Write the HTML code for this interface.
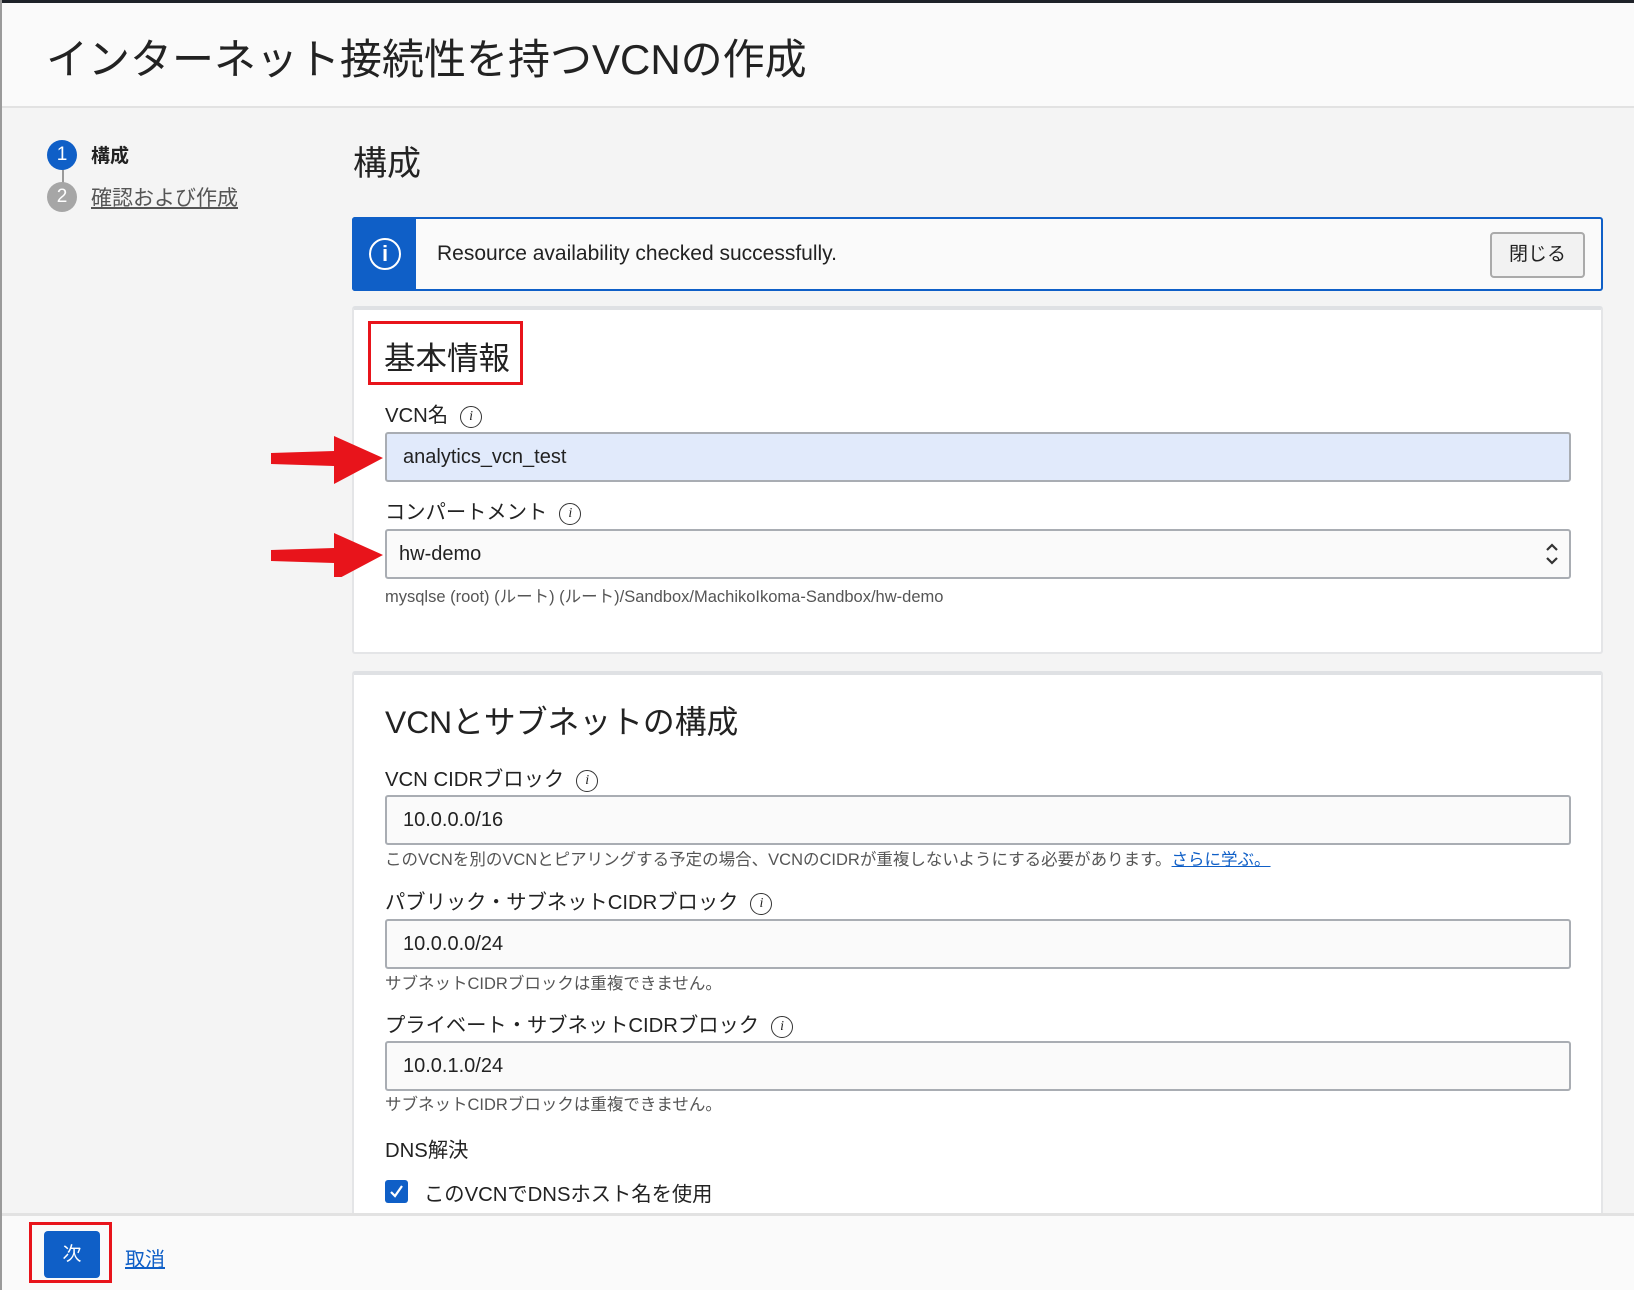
<!DOCTYPE html>
<html><head><meta charset="utf-8"><style>
*{box-sizing:border-box;margin:0;padding:0}
body{width:1634px;height:1290px;overflow:hidden;background:#f4f4f4;font-family:"Liberation Sans","Noto Sans CJK JP",sans-serif;color:#222;position:relative}
.abs{position:absolute}
.top{left:0;top:0;width:1634px;height:3px;background:#1e2228}
.lb{left:0;top:0;width:2px;height:1290px;background:#9a9a9a}
.hdr{left:2px;top:3px;width:1632px;height:105px;background:#fafafa;border-bottom:2px solid #e2e2e2}
.title{left:46px;top:26px;font-size:42px;color:#222;white-space:nowrap}
.circ{width:30px;height:30px;border-radius:50%;color:#fff;font-size:19px;text-align:center;line-height:30px}
.panel{background:#fff;border:2px solid #e4e5e7;border-top:4px solid #dfe1e4;border-radius:3px}
.lbl{font-size:20.3px;color:#222;white-space:nowrap}
.inp{left:385px;width:1186px;height:50px;border:2px solid #a9adb3;border-radius:3px;background:#fafafa;font-size:20px;padding-left:16px;line-height:46px}
.help{font-size:16.5px;color:#555;white-space:nowrap}
.ii{display:inline-block;width:22px;height:22px;border:1.5px solid #333;border-radius:50%;font-size:14px;font-style:italic;font-family:"Liberation Serif",serif;text-align:center;line-height:19px;vertical-align:middle;margin-left:12px}
</style></head><body>
<div class="abs top"></div>
<div class="abs hdr"></div>
<div class="abs lb"></div>
<div class="abs title">インターネット接続性を持つVCNの作成</div>

<div class="abs" style="left:62px;top:160px;width:2px;height:36px;background:#999"></div>
<div class="abs circ" style="left:47px;top:140px;background:#0f5fc7">1</div>
<div class="abs" style="left:91px;top:141px;font-size:19px;font-weight:bold">構成</div>
<div class="abs circ" style="left:47px;top:182px;background:#a6a6a6">2</div>
<div class="abs" style="left:91px;top:182px;font-size:21px;color:#555;text-decoration:underline">確認および作成</div>

<div class="abs" style="left:353px;top:136px;font-size:34px">構成</div>

<div class="abs" style="left:352px;top:217px;width:1251px;height:74px;border:2px solid #0f5fc7;border-radius:3px;background:#fafafa"></div>
<div class="abs" style="left:352px;top:217px;width:64px;height:74px;background:#0f5fc7;border-radius:3px 0 0 3px"></div>
<div class="abs" style="left:369px;top:238px;width:32px;height:32px;border:2.5px solid #fff;border-radius:50%;color:#fff;text-align:center;font-size:22px;line-height:27px;font-weight:bold">i</div>
<div class="abs" style="left:437px;top:242px;font-size:21px">Resource availability checked successfully.</div>
<div class="abs" style="left:1490px;top:232px;width:95px;height:46px;border:2px solid #aaa;border-radius:4px;background:#f2f2f2;font-size:19px;text-align:center;line-height:42px">閉じる</div>

<div class="abs panel" style="left:352px;top:306px;width:1251px;height:348px"></div>
<div class="abs" style="left:368px;top:321px;width:155px;height:64px;border:3px solid #e8141b"></div>
<div class="abs" style="left:384px;top:333px;font-size:31.5px">基本情報</div>
<div class="abs lbl" style="left:385px;top:398px">VCN名<span class="ii">i</span></div>
<div class="abs inp" style="top:432px;background:#e1eafb">analytics_vcn_test</div>
<div class="abs lbl" style="left:385px;top:495px">コンパートメント<span class="ii">i</span></div>
<div class="abs inp" style="top:529px;padding-left:12px">hw-demo</div>
<svg class="abs" style="left:1544px;top:541px" width="16" height="26" viewBox="0 0 16 26"><path d="M3 9 L8 4 L13 9 M3 17 L8 22 L13 17" fill="none" stroke="#333" stroke-width="2.2"/></svg>
<div class="abs help" style="left:385px;top:583px">mysqlse (root) (ルート) (ルート)/Sandbox/MachikoIkoma-Sandbox/hw-demo</div>

<svg class="abs" style="left:268px;top:432px" width="120" height="145" viewBox="0 0 120 145">
<polygon points="3,21 66,19 66,4 115,26 66,52 66,34 3,32" fill="#e8141b"/>
<polygon points="3,118 66,116 66,101 115,123 66,149 66,131 3,129" fill="#e8141b"/>
</svg>

<div class="abs panel" style="left:352px;top:671px;width:1251px;height:600px"></div>
<div class="abs" style="left:385px;top:697px;font-size:31.8px">VCNとサブネットの構成</div>
<div class="abs lbl" style="left:385px;top:762px">VCN CIDRブロック<span class="ii">i</span></div>
<div class="abs inp" style="top:795px">10.0.0.0/16</div>
<div class="abs help" style="left:385px;top:846px">このVCNを別のVCNとピアリングする予定の場合、VCNのCIDRが重複しないようにする必要があります。<span style="color:#0f5fc7;text-decoration:underline">さらに学ぶ。</span></div>
<div class="abs lbl" style="left:385px;top:885px">パブリック・サブネットCIDRブロック<span class="ii">i</span></div>
<div class="abs inp" style="top:919px">10.0.0.0/24</div>
<div class="abs help" style="left:385px;top:970px">サブネットCIDRブロックは重複できません。</div>
<div class="abs lbl" style="left:385px;top:1008px">プライベート・サブネットCIDRブロック<span class="ii">i</span></div>
<div class="abs inp" style="top:1041px">10.0.1.0/24</div>
<div class="abs help" style="left:385px;top:1091px">サブネットCIDRブロックは重複できません。</div>
<div class="abs lbl" style="left:385px;top:1133px">DNS解決</div>
<div class="abs" style="left:385px;top:1180px;width:23px;height:23px;background:#0f5fc7;border-radius:3px"></div>
<svg class="abs" style="left:385px;top:1180px" width="23" height="23" viewBox="0 0 23 23"><path d="M6 12 L10 16 L17 6" fill="none" stroke="#fff" stroke-width="2.2"/></svg>
<div class="abs lbl" style="left:424px;top:1177px">このVCNでDNSホスト名を使用</div>

<div class="abs" style="left:2px;top:1213px;width:1632px;height:77px;background:#fafafa;border-top:3px solid #e2e2e2"></div>
<div class="abs" style="left:29px;top:1222px;width:83px;height:61px;border:3px solid #e8141b"></div>
<div class="abs" style="left:44px;top:1231px;width:56px;height:47px;background:#0f5fc7;border-radius:4px;color:#fff;font-size:19px;text-align:center;line-height:47px">次</div>
<div class="abs" style="left:125px;top:1243px;font-size:20px;color:#0f5fc7;text-decoration:underline">取消</div>
</body></html>
